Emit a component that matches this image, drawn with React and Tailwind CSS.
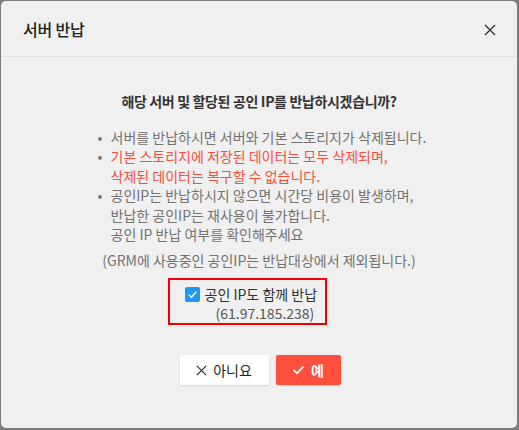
import React from "react";

export default function App() {
  const font = { fontFamily: '"Noto Sans CJK KR", "Noto Sans", sans-serif' };
  return (
    <div className="w-[519px] h-[430px] bg-[#7c7c7c] p-px" style={font}>
      <div className="w-[516px] h-[427px] bg-[#f0f0f0] rounded-[5px] flex flex-col">
        <div className="h-[56px] border-b border-[#e0e0e0] flex items-center justify-between pl-[22px] pr-[21px]">
          <span className="text-[16px] font-medium text-[#222] tracking-[-0.2px]">서버 반납</span>
          <svg width="12" height="12" viewBox="0 0 12 12" className="mt-[2px]">
            <path d="M1 1L11 11M11 1L1 11" stroke="#333" strokeWidth="1.4" />
          </svg>
        </div>
        <div className="flex flex-col items-center pt-[34px]">
          <div className="text-[14px] font-bold text-[#333] leading-[20px] tracking-[-0.35px]">해당 서버 및 할당된 공인 IP를 반납하시겠습니까?</div>
          <ul className="mt-[17px] w-[330px] ml-[7px] text-[14px] leading-[19.4px] text-[#737373] whitespace-nowrap">
            <li className="flex">
              <span className="w-[13px] shrink-0 pl-0">•</span>
              <span>서버를 반납하시면 서버와 기본 스토리지가 삭제됩니다.</span>
            </li>
            <li className="flex text-[#f5503c]">
              <span className="w-[13px] shrink-0 text-[#737373]">•</span>
              <span>기본 스토리지에 저장된 데이터는 모두 삭제되며,<br />삭제된 데이터는 복구할 수 없습니다.</span>
            </li>
            <li className="flex">
              <span className="w-[13px] shrink-0">•</span>
              <span>공인IP는 반납하시지 않으면 시간당 비용이 발생하며,<br />반납한 공인IP는 재사용이 불가합니다.<br />공인 IP 반납 여부를 확인해주세요</span>
            </li>
          </ul>
          <div className="mt-[6px] text-[14px] leading-[20px] text-[#737373]">(GRM에 사용중인 공인IP는 반납대상에서 제외됩니다.)</div>
          <div className="mt-[8px] ml-[-24px] w-[159px] h-[47px] border-2 border-[#f00000] flex flex-col items-start pt-[5px]">
            <div className="flex items-center gap-[5px] pl-[15px] h-[19px]">
              <span className="w-[15px] h-[15px] rounded-[2px] bg-[#2196f3] flex items-center justify-center">
                <svg width="11" height="11" viewBox="0 0 12 12">
                  <path d="M2 6.2L4.8 9L10.2 3" stroke="#fff" strokeWidth="1.6" fill="none" />
                </svg>
              </span>
              <span className="text-[14px] text-[#333] leading-[19px]">공인 IP도 함께 반납</span>
            </div>
            <div className="text-[14px] text-[#555] leading-[19px] pl-[46px]">(61.97.185.238)</div>
          </div>
          <div className="mt-[30px] flex gap-[7px] ml-[2px]">
            <button className="w-[89px] h-[30px] bg-white rounded-[2px] shadow-[0_1px_2px_rgba(0,0,0,0.12)] flex items-center justify-center gap-[6px] text-[14px] text-[#222]">
              <svg width="11" height="11" viewBox="0 0 12 12">
                <path d="M1 1L11 11M11 1L1 11" stroke="#333" strokeWidth="1.4" />
              </svg>
              <span>아니요</span>
            </button>
            <button className="w-[65px] h-[30px] bg-[#ff4f3d] rounded-[2px] shadow-[0_1px_2px_rgba(0,0,0,0.15)] flex items-center justify-center gap-[6px] text-[14px] font-bold text-white">
              <svg width="13" height="10" viewBox="0 0 13 10">
                <path d="M1.5 5L5 8.3L11.5 1.5" stroke="#fff" strokeWidth="1.8" fill="none" />
              </svg>
              <span>예</span>
            </button>
          </div>
        </div>
      </div>
    </div>
  );
}
